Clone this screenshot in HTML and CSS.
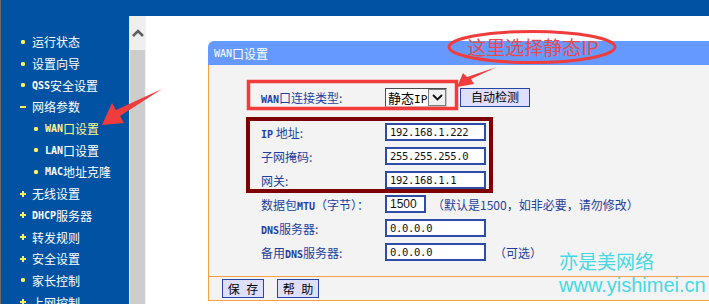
FILE: index.html
```html
<!DOCTYPE html>
<html lang="zh-CN">
<head>
<meta charset="utf-8">
<title>WAN口设置</title>
<link rel="stylesheet" href="styles.css">
</head>
<body>
<div class="page">
  <div class="topbar"></div>
  <div class="layout">
    <nav class="sidebar">
      <ul class="menu">
        <li class="item dot">运行状态</li>
        <li class="item dot">设置向导</li>
        <li class="item dot"><span class="a">QSS</span>安全设置</li>
        <li class="item minus">网络参数</li>
        <li class="sub dot current"><span class="a">WAN</span>口设置</li>
        <li class="sub dot"><span class="a">LAN</span>口设置</li>
        <li class="sub dot"><span class="a">MAC</span>地址克隆</li>
        <li class="item plus">无线设置</li>
        <li class="item plus"><span class="a">DHCP</span>服务器</li>
        <li class="item plus">转发规则</li>
        <li class="item plus">安全设置</li>
        <li class="item dot">家长控制</li>
        <li class="item plus">上网控制</li>
      </ul>
    </nav>
    <div class="scrollbar">
      <div class="scroll-up">
        <svg width="12" height="8" viewBox="0 0 12 8"><polyline points="1,7 6,2 11,7" fill="none" stroke="#5f5f5f" stroke-width="2.6"/></svg>
      </div>
      <div class="thumb"></div>
    </div>
    <main class="main">
      <section class="panel">
        <header class="panel-title"><span class="a">WAN</span>口设置</header>
        <div class="panel-body">
          <div class="row row-type">
            <span class="label"><span class="a">WAN</span>口连接类型:</span>
            <span class="select"><span class="select-text">静态<span class="a">IP</span></span><span class="select-btn"><svg width="11" height="7" viewBox="0 0 11 7"><polyline points="1,1 5.5,5.5 10,1" fill="none" stroke="#111" stroke-width="1.8"/></svg></span></span>
            <button class="btn btn-detect">自动检测</button>
          </div>
          <div class="row">
            <span class="label"><span class="a">IP</span> 地址:</span>
            <input class="field" type="text" value="192.168.1.222" readonly>
          </div>
          <div class="row">
            <span class="label">子网掩码:</span>
            <input class="field" type="text" value="255.255.255.0" readonly>
          </div>
          <div class="row">
            <span class="label">网关:</span>
            <input class="field" type="text" value="192.168.1.1" readonly>
          </div>
          <div class="row">
            <span class="label">数据包<span class="a">MTU</span>（字节）：</span>
            <input class="field field-short" type="text" value="1500" readonly>
            <span class="hint">（默认是1500，如非必要，请勿修改）</span>
          </div>
          <div class="row">
            <span class="label"><span class="a">DNS</span>服务器:</span>
            <input class="field" type="text" value="0.0.0.0" readonly>
          </div>
          <div class="row">
            <span class="label">备用<span class="a">DNS</span>服务器:</span>
            <input class="field" type="text" value="0.0.0.0" readonly>
            <span class="hint hint-opt">（可选）</span>
          </div>
        </div>
        <div class="panel-foot">
          <button class="btn btn-foot">保 存</button>
          <button class="btn btn-foot">帮 助</button>
        </div>
      </section>
    </main>
  </div>
</div>

<svg class="annotations" width="709" height="304" viewBox="0 0 709 304">
  <rect x="248.5" y="81.5" width="208" height="27" fill="none" stroke="#f23b3b" stroke-width="3.5"/>
  <rect x="248" y="119" width="243" height="72" fill="none" stroke="#7f0000" stroke-width="4"/>
  <ellipse cx="532" cy="47" rx="83" ry="15.5" fill="none" stroke="#f03c3c" stroke-width="3"/>
  <text class="note" x="533" y="55" text-anchor="middle">这里选择静态IP</text>
  <polygon points="162,89 120,116 124,123 102,125 112,103 116,110" fill="#f03c3c"/>
  <polygon points="497,67 471,79 474,84 457,87 463,73 467,77" fill="#f03c3c"/>
</svg>
<div class="watermark wm-cn">亦是美网络</div>
<div class="watermark wm-url">www.yishimei.cn</div>
</body>
</html>
```

FILE: styles.css
```css
* {
  box-sizing: border-box;
  margin: 0;
  padding: 0;
}

html,
body {
  width: 709px;
  height: 304px;
  overflow: hidden;
}

body {
  position: relative;
  background: #fff;
  font-family: "Noto Sans CJK SC", sans-serif;
  font-size: 12px;
}

.a {
  font-family: "DejaVu Sans Mono", monospace;
  font-size: 10px;
  font-weight: bold;
}

.page {
  height: 304px;
  display: flex;
  flex-direction: column;
  border-left: 1px solid #6a6a6a;
}

.topbar {
  flex: none;
  height: 16px;
  background: #0152a3;
}

.layout {
  flex: 1;
  display: flex;
  min-height: 0;
}

.sidebar {
  flex: none;
  width: 129px;
  background: #0152a3;
  border-right: 1px solid #e4ecf5;
  padding-top: 15px;
  color: #fff;
}

.menu {
  list-style: none;
}

.menu li {
  height: 21.7px;
  display: flex;
  align-items: center;
  white-space: nowrap;
}

.menu li::before {
  content: "";
  flex: none;
  width: 6px;
  height: 6px;
  margin-right: 6px;
}

.menu .item {
  padding-left: 19px;
}

.menu .sub {
  padding-left: 32px;
}

.menu .dot::before {
  background: radial-gradient(circle, #fff35c 0 2px, transparent 2.3px);
}

.menu .plus::before {
  background:
    linear-gradient(#fff35c, #fff35c) center / 6px 2px no-repeat,
    linear-gradient(#fff35c, #fff35c) center / 2px 6px no-repeat;
}

.menu .minus::before {
  background: linear-gradient(#fff35c, #fff35c) center / 6px 2px no-repeat;
}

.menu .current {
  color: #fff68f;
}

.scrollbar {
  flex: none;
  width: 16px;
  display: flex;
  flex-direction: column;
  border-right: 1px solid #f2f2f2;
}

.scroll-up {
  height: 34px;
  background: #efefef;
  display: flex;
  align-items: center;
  justify-content: center;
}

.thumb {
  flex: 1;
  background: #cdcdcd;
}

.main {
  flex: 1;
  min-width: 0;
  overflow: hidden;
  background: #fff;
  padding: 25px 0 0 62px;
}

.panel {
  width: 540px;
}

.panel-title {
  height: 24px;
  background: #6699ff;
  border-top-left-radius: 6px;
  color: #fff;
  padding-left: 6px;
  display: flex;
  align-items: center;
}

.panel-title .a {
  font-weight: normal;
}

.panel-body {
  background: #f3f3f3;
  border-left: 1px solid #f6a04a;
  padding: 20px 0 12px 52px;
}

.row {
  height: 24px;
  display: flex;
  align-items: center;
  color: #1e3f9e;
  white-space: nowrap;
}

.row-type {
  margin-bottom: 11px;
}

.label {
  flex: none;
  width: 124px;
}

.select {
  display: inline-flex;
  align-items: center;
  height: 19px;
  width: 62px;
  background: #fff;
  border: 1px solid;
  border-color: #4a4a4a #c8c8c8 #c8c8c8 #4a4a4a;
  color: #000;
  font-size: 13px;
}

.select-text {
  flex: 1;
  padding-left: 2px;
}

.select .a {
  font-weight: normal;
  font-size: 11px;
}

.select-btn {
  flex: none;
  width: 18px;
  height: 17px;
  border: 1px solid #7d7d7d;
  background: #f1f1f1;
  display: flex;
  align-items: center;
  justify-content: center;
}

.btn {
  font-family: "Noto Sans CJK SC", sans-serif;
  font-size: 12px;
  color: #000;
  background: #dedeff;
  border: 1px solid #2447a3;
  height: 19px;
  line-height: 16px;
  cursor: pointer;
}

.btn-detect {
  width: 70px;
  margin-left: 13px;
}

.field {
  flex: none;
  width: 101px;
  height: 18px;
  border: 2px solid #2d4ca6;
  background: #fff;
  padding-left: 3px;
  font-family: "DejaVu Sans Mono", monospace;
  font-size: 10.5px;
  letter-spacing: -0.3px;
  color: #111;
  outline: none;
}

.field-short {
  width: 41px;
  font-family: "Liberation Sans", sans-serif;
  letter-spacing: 0;
  font-size: 12px;
}

.hint {
  margin-left: 6px;
}

.hint-opt {
  margin-left: 8px;
}

.panel-foot {
  height: 25px;
  background: #f3f3f3;
  border: 1px solid #f6a04a;
  border-right: none;
  padding: 2px 0 0 13px;
  display: flex;
  align-items: flex-start;
  gap: 13px;
}

.btn-foot {
  width: 42px;
  word-spacing: 4px;
}

.annotations {
  position: absolute;
  left: 0;
  top: 0;
  pointer-events: none;
}

.note {
  font-family: "Noto Sans CJK SC", sans-serif;
  font-size: 19px;
  fill: #ea4a4a;
}

.watermark {
  position: absolute;
  left: 559px;
  line-height: 1;
  white-space: nowrap;
  color: #45d9e6;
}

.wm-cn {
  top: 251px;
  font-family: "Noto Sans CJK SC", sans-serif;
  font-size: 19px;
}

.wm-url {
  top: 275px;
  font-family: "Liberation Sans", sans-serif;
  font-size: 20px;
}
```
